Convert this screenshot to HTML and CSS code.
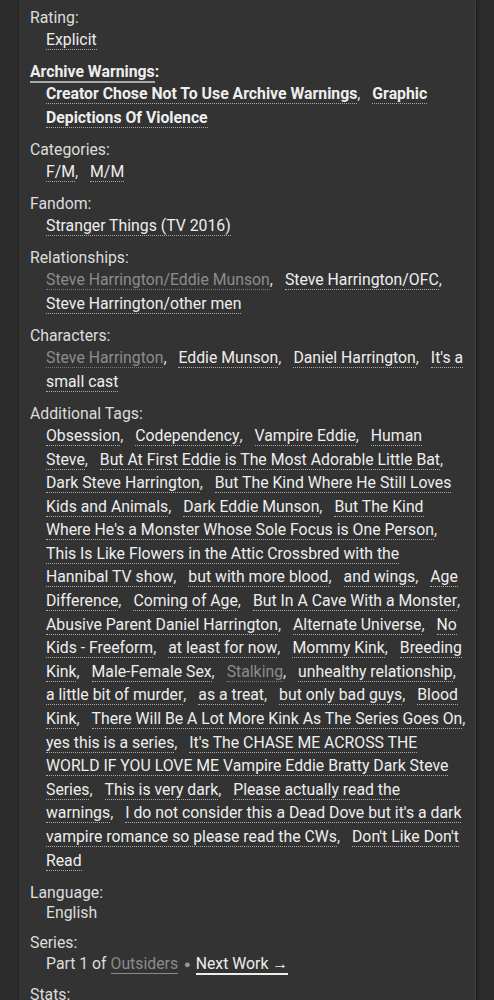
FILE: index.html
```html
<!DOCTYPE html>
<html lang="en">
<head>
  <meta charset="UTF-8" />
  <meta name="viewport" content="width=device-width, initial-scale=1" />
  <title>Work Meta</title>
  <link rel="stylesheet" href="styles.css">
</head>
<body>

<div class="wrapper">
  <dl class="meta">
    <dt>Rating:</dt>
    <dd>
      <ul class="commas">
        <li><a href="#">Explicit</a></li>
      </ul>
    </dd>

    <dt class="warning"><span>Archive Warnings</span>:</dt>
    <dd class="warning">
      <ul class="commas">
        <li><a href="#">Creator Chose Not To Use Archive Warnings</a></li>
        <li><a href="#">Graphic Depictions Of Violence</a></li>
      </ul>
    </dd>

    <dt>Categories:</dt>
    <dd>
      <ul class="commas">
        <li><a href="#">F/M</a></li>
        <li><a href="#">M/M</a></li>
      </ul>
    </dd>

    <dt>Fandom:</dt>
    <dd>
      <ul class="commas">
        <li><a href="#">Stranger Things (TV 2016)</a></li>
      </ul>
    </dd>

    <dt>Relationships:</dt>
    <dd>
      <ul class="commas">
        <li><a href="#" class="visited">Steve Harrington/Eddie Munson</a></li>
        <li><a href="#">Steve Harrington/OFC</a></li>
        <li><a href="#">Steve Harrington/other men</a></li>
      </ul>
    </dd>

    <dt>Characters:</dt>
    <dd>
      <ul class="commas">
        <li><a href="#" class="visited">Steve Harrington</a></li>
        <li><a href="#">Eddie Munson</a></li>
        <li><a href="#">Daniel Harrington</a></li>
        <li><a href="#">It's a small cast</a></li>
      </ul>
    </dd>

    <dt>Additional Tags:</dt>
    <dd>
      <ul class="commas">
        <li><a href="#">Obsession</a></li>
        <li><a href="#">Codependency</a></li>
        <li><a href="#">Vampire Eddie</a></li>
        <li><a href="#">Human Steve</a></li>
        <li><a href="#">But At First Eddie is The Most Adorable Little Bat</a></li>
        <li><a href="#">Dark Steve Harrington</a></li>
        <li><a href="#">But The Kind Where He Still Loves Kids and Animals</a></li>
        <li><a href="#">Dark Eddie Munson</a></li>
        <li><a href="#">But The Kind Where He's a Monster Whose Sole Focus is One Person</a></li>
        <li><a href="#">This Is Like Flowers in the Attic Crossbred with the Hannibal TV show</a></li>
        <li><a href="#">but with more blood</a></li>
        <li><a href="#">and wings</a></li>
        <li><a href="#">Age Difference</a></li>
        <li><a href="#">Coming of Age</a></li>
        <li><a href="#">But In A Cave With a Monster</a></li>
        <li><a href="#">Abusive Parent Daniel Harrington</a></li>
        <li><a href="#">Alternate Universe</a></li>
        <li><a href="#">No Kids - Freeform</a></li>
        <li><a href="#">at least for now</a></li>
        <li><a href="#">Mommy Kink</a></li>
        <li><a href="#">Breeding Kink</a></li>
        <li><a href="#">Male-Female Sex</a></li>
        <li><a href="#" class="visited">Stalking</a></li>
        <li><a href="#">unhealthy relationship</a></li>
        <li><a href="#">a little bit of murder</a></li>
        <li><a href="#">as a treat</a></li>
        <li><a href="#">but only bad guys</a></li>
        <li><a href="#">Blood Kink</a></li>
        <li><a href="#">There Will Be A Lot More Kink As The Series Goes On</a></li>
        <li><a href="#">yes this is a series</a></li>
        <li><a href="#">It's The CHASE ME ACROSS THE WORLD IF YOU LOVE ME Vampire Eddie Bratty Dark Steve Series</a></li>
        <li><a href="#">This is very dark</a></li>
        <li><a href="#">Please actually read the warnings</a></li>
        <li><a href="#">I do not consider this a Dead Dove but it's a dark vampire romance so please read the CWs</a></li>
        <li><a href="#">Don't Like Don't Read</a></li>
      </ul>
    </dd>

    <dt>Language:</dt>
    <dd class="plain">English</dd>

    <dt>Series:</dt>
    <dd class="series">
      Part 1 of <a href="#" class="series-link">Outsiders</a><span class="divider">&#9679;</span><a href="#" class="next">Next Work &rarr;</a>
    </dd>

    <dt>Stats:</dt>
    <dd class="plain">&nbsp;</dd>
  </dl>
</div>

</body>
</html>
```

FILE: styles.css
```css
body {
  background-color: #2c2c2c;
  color: #ddd;
  font-family: Roboto, "Noto Sans", sans-serif;
  font-size: 15.8px;
  margin: 0;
}

.wrapper {
  margin-left: 18px;
  width: 458px;
  background-color: #333;
  border-left: 1px solid #262626;
  border-right: 1px solid #3e3e3e;
  box-shadow: 2px 0 3px #202020;
  padding: 7px 10px 20px 11px;
  box-sizing: border-box;
  min-height: 1000px;
}

.meta {
  margin: 0;
}

.meta dt {
  line-height: 21px;
  color: #ddd;
}

.meta dd {
  margin: 0 0 9.6px 16px;
  line-height: 23.6px;
}

/* Archive warnings */
.meta dt.warning {
  font-weight: bold;
  color: #eee;
}

.meta dt.warning span {
  border-bottom: 2px solid #aaa;
}

.meta dd.warning a {
  font-weight: bold;
}

/* Tag lists - the gap is widened whitespace so it hangs at line ends,
   and the comma is a touch tighter so it may sit at the edge */
ul.commas {
  list-style: none;
  margin: 0;
  padding: 0;
  word-spacing: 9px;
}

ul.commas li {
  display: inline;
  word-spacing: normal;
}

ul.commas li::after {
  content: ",";
  letter-spacing: -1px;
}

ul.commas li:last-child::after {
  content: "";
}

.meta a {
  color: #eee;
  text-decoration: none;
  border-bottom: 1px dotted #aaa;
}

.meta a.visited {
  color: #8c8c8c;
  border-bottom-color: #777;
}

.meta dd.plain {
  line-height: 19px;
  margin-bottom: 10px;
}

/* Series nav */
.meta dd.series {
  line-height: 21px;
  margin-bottom: 8px;
}

.meta a.series-link {
  color: #8c8c8c;
  border-bottom: 1px solid #8c8c8c;
}

.divider {
  color: #999;
  font-size: 11px;
  margin: 0 5px 0 6px;
  position: relative;
  top: -1px;
}

.meta a.next {
  border-bottom: 2px solid #eee;
}
```
